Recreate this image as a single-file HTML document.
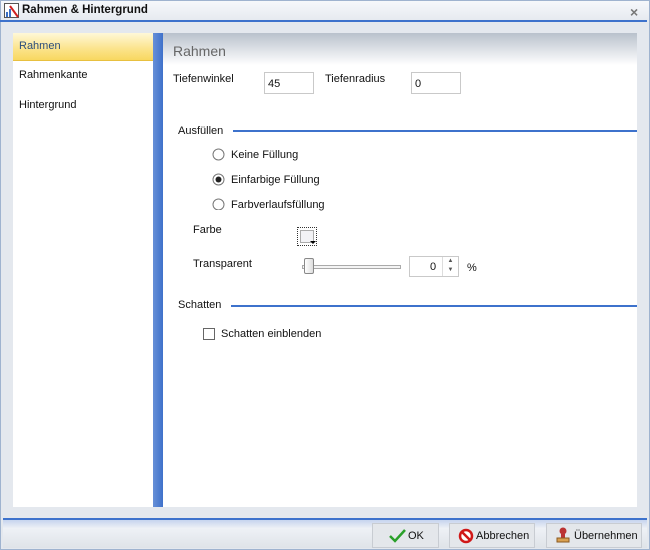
<!DOCTYPE html><html><head><style>
*{margin:0;padding:0;box-sizing:border-box}
body{width:650px;height:550px;position:relative;background:#e4e8ee;font-family:"Liberation Sans",sans-serif;font-size:11px;color:#111;overflow:hidden}
.a{position:absolute}
</style></head><body>
<div class="a" style="left:0;top:0;width:650px;height:550px;border:1px solid #9fb3cf"></div>
<div class="a" style="left:1px;top:1px;width:648px;height:19px;background:linear-gradient(#f6f8fb,#e6eaf0)"></div>
<svg class="a" style="left:4px;top:3px" width="16" height="16"><rect x="0.5" y="0.5" width="14" height="14" fill="#fff" stroke="#555"/><rect x="2" y="9" width="2" height="5" fill="#3a6fc4"/><rect x="5" y="6" width="2" height="8" fill="#3a6fc4"/><path d="M6 3 L14 14" stroke="#d02020" stroke-width="2"/></svg>
<div class="a" style="left:22px;top:4px;font-weight:bold;font-size:11.5px">Rahmen &amp; Hintergrund</div>
<div class="a" style="left:630px;top:4px;font-size:14px;color:#777;font-weight:bold">×</div>
<div class="a" style="left:0;top:20px;width:647px;height:2px;background:#3d72cc"></div>
<div class="a" style="left:13px;top:33px;width:140px;height:474px;background:#fff"></div>
<div class="a" style="left:13px;top:33px;width:140px;height:28px;background:linear-gradient(#fff8d8,#fbe38a 60%,#f8d860);border-bottom:1px solid #e8c040"></div>
<div class="a" style="left:19px;top:40px;color:#2c4d7a">Rahmen</div>
<div class="a" style="left:19px;top:69px">Rahmenkante</div>
<div class="a" style="left:19px;top:99px">Hintergrund</div>
<div class="a" style="left:153px;top:33px;width:10px;height:474px;background:linear-gradient(90deg,#6790d8,#3f71ca)"></div>
<div class="a" style="left:163px;top:33px;width:474px;height:474px;background:#fff"></div>
<div class="a" style="left:163px;top:33px;width:474px;height:32px;background:linear-gradient(#b9c1cc,#fff)"></div>
<div class="a" style="left:173px;top:43px;font-size:14px;color:#666">Rahmen</div>
<div class="a" style="left:173px;top:73px">Tiefenwinkel</div>
<div class="a" style="left:264px;top:72px;width:50px;height:22px;border:1px solid #c9c9c9;padding:5px 0 0 3px">45</div>
<div class="a" style="left:325px;top:73px">Tiefenradius</div>
<div class="a" style="left:411px;top:72px;width:50px;height:22px;border:1px solid #c9c9c9;padding:5px 0 0 3px">0</div>
<div class="a" style="left:178px;top:125px">Ausfüllen</div>
<div class="a" style="left:233px;top:130px;width:404px;height:2px;background:#3d72cc"></div>
<svg class="a" style="left:212px;top:148px" width="14" height="62"><circle cx="6.5" cy="6.5" r="5.5" fill="#fff" stroke="#777"/><circle cx="6.5" cy="31.5" r="5.5" fill="#fff" stroke="#777"/><circle cx="6.5" cy="31.5" r="3" fill="#222"/><circle cx="6.5" cy="56.5" r="5.5" fill="#fff" stroke="#777"/></svg>
<div class="a" style="left:231px;top:149px">Keine Füllung</div>
<div class="a" style="left:231px;top:174px">Einfarbige Füllung</div>
<div class="a" style="left:231px;top:199px">Farbverlaufsfüllung</div>
<div class="a" style="left:193px;top:224px">Farbe</div>
<div class="a" style="left:297px;top:227px;width:20px;height:19px;border:1px dotted #333;padding:2px"><div style="width:14px;height:13px;border:1px solid #aaa;background:#f2f2f5"></div></div>
<div class="a" style="left:310px;top:241px;width:0;height:0;border:3px solid transparent;border-top:3px solid #000"></div>
<div class="a" style="left:193px;top:258px">Transparent</div>
<div class="a" style="left:302px;top:265px;width:99px;height:4px;border:1px solid #aaa;background:#f4f4f4"></div>
<div class="a" style="left:304px;top:258px;width:10px;height:16px;border:1px solid #888;background:linear-gradient(90deg,#fff,#ddd);border-radius:2px"></div>
<div class="a" style="left:409px;top:256px;width:50px;height:21px;border:1px solid #c9c9c9"></div>
<div class="a" style="left:430px;top:261px">0</div>
<div class="a" style="left:442px;top:257px;width:16px;height:19px;border-left:1px solid #ddd;font-size:6px;color:#555;text-align:center;line-height:9px">▲<br>▼</div>
<div class="a" style="left:467px;top:262px">%</div>
<div class="a" style="left:178px;top:299px">Schatten</div>
<div class="a" style="left:231px;top:305px;width:406px;height:2px;background:#3d72cc"></div>
<div class="a" style="left:203px;top:328px;width:12px;height:12px;border:1px solid #666;background:#fff"></div>
<div class="a" style="left:221px;top:328px">Schatten einblenden</div>
<div class="a" style="left:3px;top:518px;width:644px;height:2px;background:#3d72cc"></div>
<div class="a" style="left:3px;top:520px;width:644px;height:28px;background:linear-gradient(#c6d4ee,#eef1f6 30%,#dfe3e8)"></div>
<div class="a" style="left:372px;top:523px;width:67px;height:25px;border:1px solid #c8ccd2;background:#e4e7eb"></div>
<svg class="a" style="left:388px;top:528px" width="20" height="16"><path d="M2 8 L7 13 L17 2" stroke="#2aa02a" stroke-width="2.5" fill="none"/></svg>
<div class="a" style="left:408px;top:530px">OK</div>
<div class="a" style="left:449px;top:523px;width:86px;height:25px;border:1px solid #c8ccd2;background:#e4e7eb"></div>
<svg class="a" style="left:458px;top:528px" width="16" height="16"><circle cx="8" cy="8" r="6" fill="#fff" stroke="#d01818" stroke-width="2.5"/><path d="M4 4 L12 12" stroke="#d01818" stroke-width="2.5"/></svg>
<div class="a" style="left:476px;top:530px">Abbrechen</div>
<div class="a" style="left:546px;top:523px;width:96px;height:25px;border:1px solid #c8ccd2;background:#e4e7eb"></div>
<svg class="a" style="left:555px;top:527px" width="16" height="17"><circle cx="8" cy="4" r="3.5" fill="#b33"/><rect x="6" y="7" width="4" height="4" fill="#b33"/><rect x="2" y="11" width="12" height="4" fill="#d9a050" stroke="#8a5a20"/></svg>
<div class="a" style="left:574px;top:530px">Übernehmen</div>
</body></html>
